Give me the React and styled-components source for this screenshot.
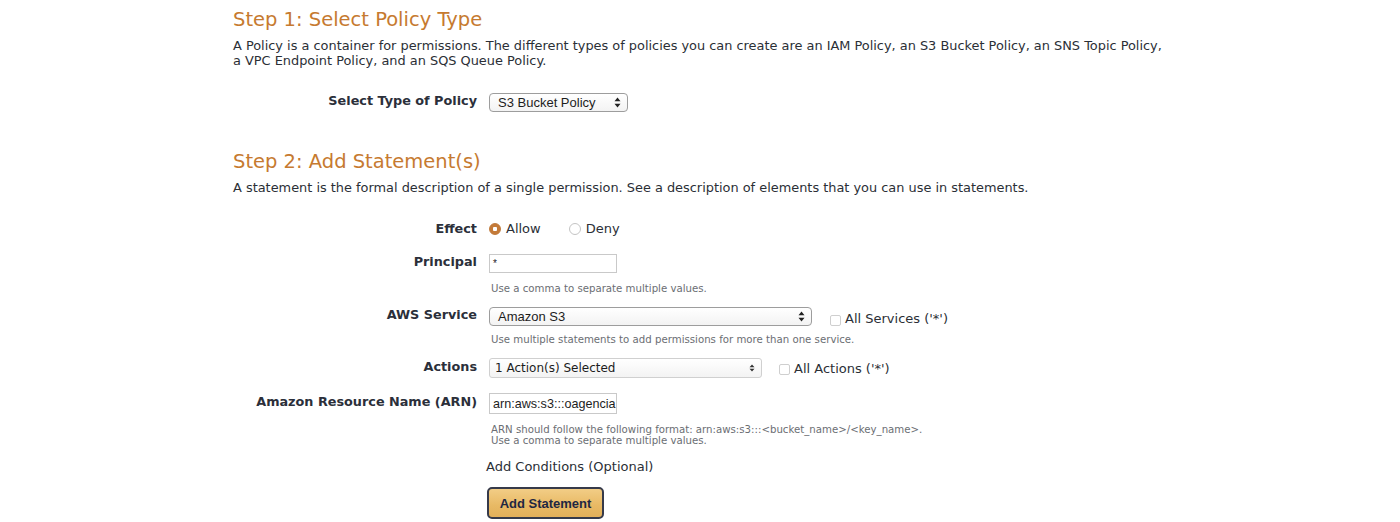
import React from 'react'
import styled, { createGlobalStyle } from 'styled-components'

const GlobalStyle = createGlobalStyle`
    body {
        margin: 0;
        background: #ffffff;
        font-family: 'DejaVu Sans', Verdana, sans-serif;
        color: #2b2f36;
    }
`

const Page = styled.div`
    width: 934px;
    margin: 0 auto;
    padding-top: 8px;
`

const Heading = styled.h2`
    margin: ${(p) => p.$top || 0}px 0 0 0;
    font-size: 19.5px;
    line-height: 24px;
    font-weight: 400;
    color: #c67a30;
`

const Description = styled.p`
    margin: 6px 0 0 0;
    font-size: 12.9px;
    line-height: 15px;
    color: #2b2f36;
`

const Row = styled.div`
    display: grid;
    grid-template-columns: 244px 1fr;
    column-gap: 12px;
    align-items: center;
    margin-top: ${(p) => p.$top || 0}px;
`

const Label = styled.div`
    text-align: right;
    font-weight: 700;
    font-size: 12.8px;
    color: #2b2f3a;
    margin-top: -4px;
`

const Controls = styled.div`
    display: flex;
    align-items: center;
`

const Hint = styled.div`
    margin: ${(p) => p.$top || 0}px 0 0 258px;
    font-size: 10.2px;
    line-height: 11px;
    color: #6b6e73;
`

const Select = styled.div`
    box-sizing: border-box;
    width: ${(p) => p.$w}px;
    height: ${(p) => p.$h || 19}px;
    display: flex;
    align-items: center;
    justify-content: space-between;
    padding: 0 6px 0 8px;
    border: 1px solid #9d9d9d;
    border-radius: 4px;
    background: linear-gradient(#ffffff, #f3f3f3);
    font-family: ${(p) => (p.$verdana ? "'DejaVu Sans', Verdana, sans-serif" : "'Liberation Sans', Arial, sans-serif")};
    font-size: ${(p) => (p.$verdana ? '12px' : '13px')};
    color: #1d1d1d;
    ${(p) => p.$flat && `border-color: #d0d0d0; border-radius: 3px; padding-left: 5px;`}
`

const Input = styled.div`
    box-sizing: border-box;
    width: 128px;
    height: ${(p) => p.$h || 19}px;
    display: flex;
    align-items: center;
    padding: 0 2px 0 3px;
    white-space: nowrap;
    border: 1px solid #c9c9c9;
    background: #fff;
    font-family: 'Liberation Sans', Arial, sans-serif;
    font-size: ${(p) => p.$fs || 12.6}px;
    color: #1d1d1d;
`

const Radio = styled.span`
    box-sizing: border-box;
    display: inline-block;
    width: 12px;
    height: 12px;
    border-radius: 50%;
    margin-right: 5px;
    border: 1px solid ${(p) => (p.$on ? '#c0793a' : '#c4c4c4')};
    background: ${(p) => (p.$on ? 'radial-gradient(circle, #ffffff 0 2px, #c47a38 2.5px)' : '#ffffff')};
`

const Choice = styled.label`
    display: flex;
    align-items: center;
    font-size: 13px;
    color: #2b2f36;
    margin-right: ${(p) => p.$gap || 0}px;
    margin-left: ${(p) => p.$left || 0}px;
    margin-top: ${(p) => p.$lift || 0}px;
`

const Check = styled.span`
    box-sizing: border-box;
    display: inline-block;
    width: 11px;
    height: 11px;
    border: 1px solid #cfcfcf;
    border-radius: 2px;
    margin-right: 4px;
    margin-top: 3px;
    background: #fff;
`

const Conditions = styled.div`
    margin: 13px 0 0 253px;
    font-size: 13px;
    line-height: 16px;
    color: #2b2f36;
`

const Button = styled.button`
    display: block;
    margin: 12px 0 0 254px;
    box-sizing: border-box;
    width: 117px;
    height: 32px;
    border: 2px solid #363a4a;
    border-radius: 5px;
    background: linear-gradient(#f2cd86, #e8b964 60%, #e2b05a);
    font-family: 'Liberation Sans', Arial, sans-serif;
    font-weight: 700;
    font-size: 13px;
    color: #1e2742;
    padding: 0;
`

function Arrows({ small }) {
    if (small) {
        return (
            <svg width="6" height="8" viewBox="0 0 6 8">
                <path d="M3 0.5 L5.5 3.2 L0.5 3.2 Z M3 7.5 L5.5 4.8 L0.5 4.8 Z" fill="#333" />
            </svg>
        )
    }
    return (
        <svg width="7" height="11" viewBox="0 0 7 11">
            <path d="M3.5 0.5 L6.5 4.3 L0.5 4.3 Z M3.5 10.5 L6.5 6.7 L0.5 6.7 Z" fill="#222" />
        </svg>
    )
}

export default function App() {
    return (
        <>
            <GlobalStyle />
            <Page>
                <Heading>Step 1: Select Policy Type</Heading>
                <Description>
                    A Policy is a container for permissions. The different types of policies you can create are an IAM Policy, an S3 Bucket Policy, an SNS Topic Policy,
                    <br />
                    a VPC Endpoint Policy, and an SQS Queue Policy.
                </Description>

                <Row $top={25}>
                    <Label>Select Type of Policy</Label>
                    <Controls>
                        <Select $w={139}>
                            <span>S3 Bucket Policy</span>
                            <Arrows />
                        </Select>
                    </Controls>
                </Row>

                <Heading $top={38}>Step 2: Add Statement(s)</Heading>
                <Description>
                    A statement is the formal description of a single permission. See a description of elements that you can use in statements.
                </Description>

                <Row $top={29}>
                    <Label>Effect</Label>
                    <Controls>
                        <Choice $gap={28} $lift={-3}>
                            <Radio $on />
                            Allow
                        </Choice>
                        <Choice $lift={-3}>
                            <Radio />
                            Deny
                        </Choice>
                    </Controls>
                </Row>

                <Row $top={18}>
                    <Label>Principal</Label>
                    <Controls>
                        <Input $fs={10}>*</Input>
                    </Controls>
                </Row>
                <Hint $top={10}>Use a comma to separate multiple values.</Hint>

                <Row $top={12}>
                    <Label>AWS Service</Label>
                    <Controls>
                        <Select $w={323}>
                            <span>Amazon S3</span>
                            <Arrows />
                        </Select>
                        <Choice $left={18} $lift={5}>
                            <Check />
                            All Services ('*')
                        </Choice>
                    </Controls>
                </Row>
                <Hint $top={8}>Use multiple statements to add permissions for more than one service.</Hint>

                <Row $top={13}>
                    <Label>Actions</Label>
                    <Controls>
                        <Select $w={273} $h={20} $verdana $flat>
                            <span>1 Action(s) Selected</span>
                            <Arrows small />
                        </Select>
                        <Choice $left={17}>
                            <Check />
                            All Actions ('*')
                        </Choice>
                    </Controls>
                </Row>

                <Row $top={15}>
                    <Label>Amazon Resource Name (ARN)</Label>
                    <Controls>
                        <Input $h={21}>arn:aws:s3:::oagencia</Input>
                    </Controls>
                </Row>
                <Hint $top={10}>
                    ARN should follow the following format: arn:aws:s3:::&lt;bucket_name&gt;/&lt;key_name&gt;.
                    <br />
                    Use a comma to separate multiple values.
                </Hint>

                <Conditions>Add Conditions (Optional)</Conditions>
                <Button>Add Statement</Button>
            </Page>
        </>
    )
}
